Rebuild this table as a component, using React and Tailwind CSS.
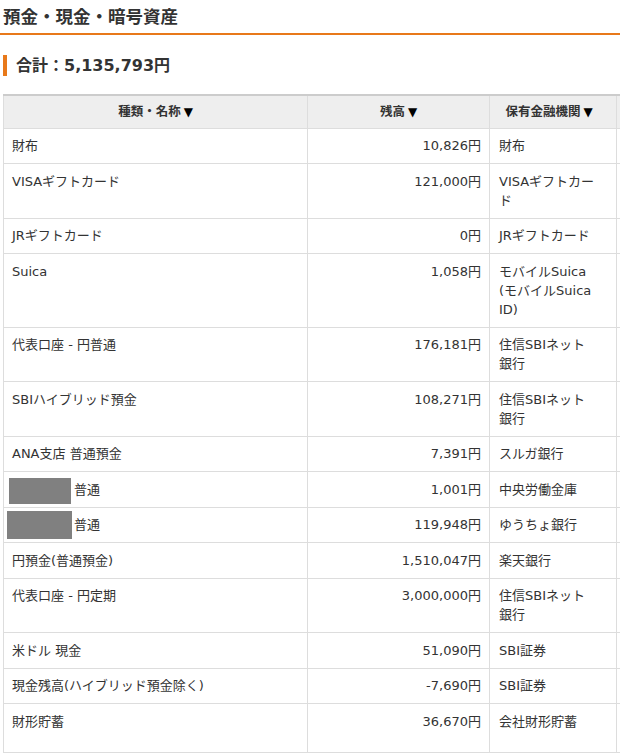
import React from "react";

const rows = [
  { name: "財布", amt: "10,826円", inst: ["財布"] },
  { name: "VISAギフトカード", amt: "121,000円", inst: ["VISAギフトカー", "ド"] },
  { name: "JRギフトカード", amt: "0円", inst: ["JRギフトカード"] },
  { name: "Suica", amt: "1,058円", inst: ["モバイルSuica", "(モバイルSuica", "ID)"] },
  { name: "代表口座 - 円普通", amt: "176,181円", inst: ["住信SBIネット", "銀行"] },
  { name: "SBIハイブリッド預金", amt: "108,271円", inst: ["住信SBIネット", "銀行"] },
  { name: "ANA支店 普通預金", amt: "7,391円", inst: ["スルガ銀行"] },
  { name: "普通", amt: "1,001円", inst: ["中央労働金庫"], redact: 1 },
  { name: "普通", amt: "119,948円", inst: ["ゆうちょ銀行"], redact: 2 },
  { name: "円預金(普通預金)", amt: "1,510,047円", inst: ["楽天銀行"] },
  { name: "代表口座 - 円定期", amt: "3,000,000円", inst: ["住信SBIネット", "銀行"] },
  { name: "米ドル 現金", amt: "51,090円", inst: ["SBI証券"] },
  { name: "現金残高(ハイブリッド預金除く)", amt: "-7,690円", inst: ["SBI証券"] },
  { name: "財形貯蓄", amt: "36,670円", inst: ["会社財形貯蓄"], last: true },
];

function Name({ r }) {
  if (r.redact === 1) {
    return (
      <span className="relative inline-block pl-[62px]">
        <span className="absolute left-[-3px] top-[-2px] w-[62px] h-[26px] bg-[#808080]" />
        {r.name}
      </span>
    );
  }
  if (r.redact === 2) {
    return (
      <span className="relative inline-block pl-[62px]">
        <span className="absolute left-[-5px] top-[-4px] w-[65px] h-[28px] bg-[#808080]" />
        {r.name}
      </span>
    );
  }
  return r.name;
}

export default function App() {
  return (
    <div
      className="w-[620px] overflow-hidden bg-white text-[#333]"
      style={{ fontFamily: '"DejaVu Sans", "Noto Sans CJK JP", sans-serif' }}
    >
      <h1 className="text-[17.5px] font-bold leading-[24px] pt-[5px] pb-[4px] pl-[3px] border-b-2 border-[#e8791a]">
        預金・現金・暗号資産
      </h1>
      <h2 className="mt-[20px] ml-[3px] border-l-4 border-[#e8791a] pl-[9px] text-[16px] font-bold leading-[21px]">
        合計：5,135,793円
      </h2>
      <div className="mt-[18px] pl-[3px]">
        <table className="table-fixed border-collapse w-[713px] text-[13px] leading-[19px]">
          <colgroup>
            <col className="w-[304px]" />
            <col className="w-[182px]" />
            <col className="w-[127px]" />
            <col className="w-[100px]" />
          </colgroup>
          <thead>
            <tr className="bg-[#eee]">
              <th className="border border-[#ddd] border-t-2 border-t-[#ccc] h-[33px] px-2 text-center font-bold text-[12.5px]">
                種類・名称<span className="text-[12px] ml-[3px] text-black">▼</span>
              </th>
              <th className="border border-[#ddd] border-t-2 border-t-[#ccc] px-2 text-center font-bold text-[12.5px]">
                残高<span className="text-[12px] ml-[3px] text-black">▼</span>
              </th>
              <th className="border border-[#ddd] border-t-2 border-t-[#ccc] pl-2 pr-4 text-center font-bold text-[12.5px] whitespace-nowrap">
                保有金融機関<span className="text-[12px] ml-[3px] text-black">▼</span>
              </th>
              <th className="border border-[#ddd] border-t-2 border-t-[#ccc] px-2"></th>
            </tr>
          </thead>
          <tbody>
            {rows.map((r, i) => (
              <tr key={i} className={r.last ? "h-[49px]" : ""}>
                <td className="border border-[#ddd] align-top px-2 py-[7.75px]">
                  <Name r={r} />
                </td>
                <td className="border border-[#ddd] align-top px-2 py-[7.75px] text-right">
                  {r.amt}
                </td>
                <td className="border border-[#ddd] align-top pl-[9px] pr-2 py-[7.75px]">
                  {r.inst.map((l, j) => (
                    <React.Fragment key={j}>
                      {j > 0 && <br />}
                      {l}
                    </React.Fragment>
                  ))}
                </td>
                <td className="border border-[#ddd] align-top px-2 py-[7.75px]"></td>
              </tr>
            ))}
          </tbody>
        </table>
      </div>
    </div>
  );
}
